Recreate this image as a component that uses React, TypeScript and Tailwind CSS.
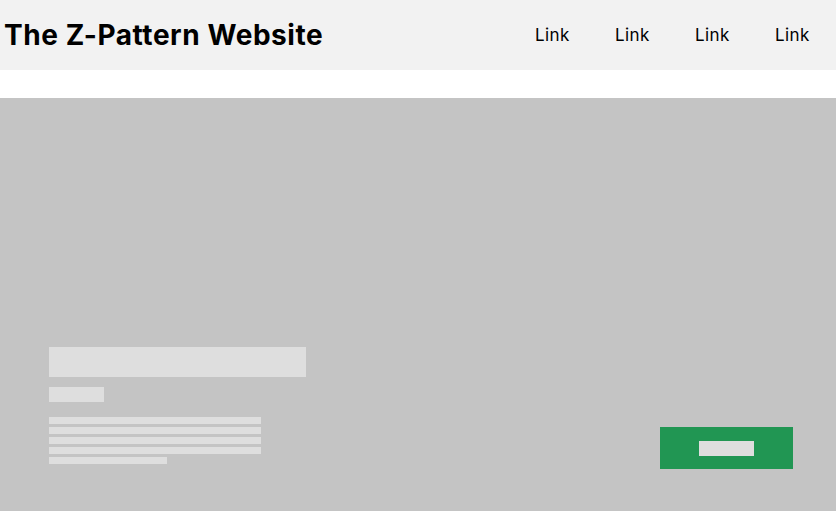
import React from "react";

const links = ["Link", "Link", "Link", "Link"];

const App: React.FC = () => {
  return (
    <div className="min-h-screen bg-white font-['Inter',sans-serif] text-black">
      <header className="flex h-[70px] items-center justify-between bg-[#f2f2f2] pl-[4px] pr-[26px]">
        <h1 className="text-[28px] font-bold leading-none tracking-[0.55px]">
          The Z-Pattern Website
        </h1>
        <nav className="flex gap-[45px] text-[17px] tracking-[0.4px]">
          {links.map((l, i) => (
            <a key={i} href="#" className="w-[35px] leading-none">
              {l}
            </a>
          ))}
        </nav>
      </header>

      <section className="mt-[28px] flex h-[413px] justify-between bg-[#c4c4c4] pl-[49px] pr-[43px]">
        <div className="flex flex-col pt-[249px]">
          <div className="h-[30px] w-[257px] bg-[#dedede]" />
          <div className="mt-[10px] h-[15px] w-[55px] bg-[#dedede]" />
          <div className="mt-[15px] flex flex-col gap-[3px]">
            <div className="h-[7px] w-[212px] bg-[#dedede]" />
            <div className="h-[7px] w-[212px] bg-[#dedede]" />
            <div className="h-[7px] w-[212px] bg-[#dedede]" />
            <div className="h-[7px] w-[212px] bg-[#dedede]" />
            <div className="h-[7px] w-[118px] bg-[#dedede]" />
          </div>
        </div>
        <div className="mt-[329px] flex h-[42px] w-[133px] items-center justify-center bg-[#219653]">
          <div className="h-[15px] w-[55px] bg-[#dedede]" />
        </div>
      </section>
    </div>
  );
};

export default App;
